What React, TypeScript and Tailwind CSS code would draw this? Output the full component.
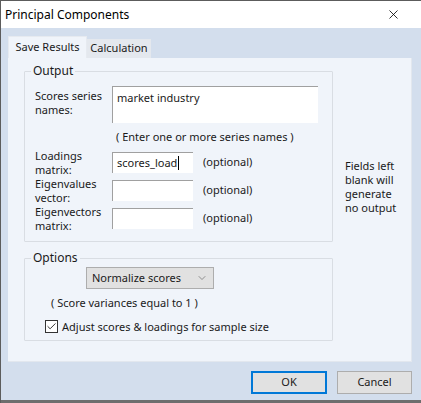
import { X, ChevronDown, Check } from "lucide-react";

const font = { fontFamily: '"Noto Sans", "Liberation Sans", sans-serif' };

// Label + single-line input + "(optional)" hint
const FieldRow = ({ label1, label2, value }: { label1: string; label2: string; value?: string }) => (
  <div className="flex items-center h-[28px]">
    <div className="w-[87px] pl-[10px] leading-[14px]">
      <div>{label1}</div>
      <div>{label2}</div>
    </div>
    <div className="w-[81px] h-[21px] bg-white border-t border-l border-[#a0a0a0] flex items-center pl-[4px]">
      {value && (
        <span className="flex items-center">
          {value}
          <span className="inline-block w-px h-[14px] bg-black ml-[1px]" />
        </span>
      )}
    </div>
    <span className="ml-[10px]">(optional)</span>
  </div>
);

export default function App() {
  return (
    <div
      className="w-[421px] h-[403px] flex flex-col bg-[#d3deed] border-l border-t border-[#5c5c5c] text-[11px] text-[#1a1a1a] overflow-hidden"
      style={font}
    >
      {/* title bar */}
      <div className="h-[27px] bg-white flex items-center justify-between pl-[4px] pr-[20px] shrink-0">
        <span className="text-[12px] text-black">Principal Components</span>
        <X size={15} strokeWidth={1.3} className="text-black" />
      </div>

      {/* tabs */}
      <div className="flex items-end pl-[7px] h-[30px] shrink-0">
        <div className="w-[79px] h-[22px] bg-[#f0f4fa] border-t border-l border-r border-[#e6eaf0] flex items-center justify-center">
          Save Results
        </div>
        <div className="w-[64px] h-[19px] bg-[#e4e8ee] flex items-center justify-center">Calculation</div>
      </div>

      {/* tab panel */}
      <div className="ml-[7px] w-[404px] h-[304px] bg-[#f0f4fa] border-r border-b border-[#e2e7ee] pl-[16px] pt-[4px] shrink-0">
        <div className="flex">
          <fieldset className="w-[309px] h-[180px] border border-[#d9dde3] rounded-[1px] px-0">
            <legend className="ml-[6px] px-[2px] text-[12px]">Output</legend>
            <div className="flex items-start mt-[6px]">
              <div className="w-[87px] pl-[10px] pt-[3px] leading-[14px]">
                <div>Scores series</div>
                <div>names:</div>
              </div>
              <div className="w-[206px] h-[37px] bg-white border-t border-l border-[#a0a0a0] pl-[4px] pt-[3px]">
                market industry
              </div>
            </div>
            <div className="pl-[91px] mt-[6px] mb-[3px]">( Enter one or more series names )</div>
            <FieldRow label1="Loadings" label2="matrix:" value="scores_load" />
            <FieldRow label1="Eigenvalues" label2="vector:" />
            <FieldRow label1="Eigenvectors" label2="matrix:" />
          </fieldset>
          <div className="ml-[12px] mt-[97px] leading-[14px]">
            Fields left
            <br />
            blank will
            <br />
            generate
            <br />
            no output
          </div>
        </div>

        <fieldset className="w-[309px] h-[92px] mt-[7px] border border-[#d9dde3] rounded-[1px] px-0">
          <legend className="ml-[6px] px-[2px] text-[12px]">Options</legend>
          <div className="pl-[61px]">
            <div className="w-[128px] h-[22px] bg-[#e1e1e1] border border-[#adadad] flex items-center justify-between pl-[5px] pr-[5px]">
              <span>Normalize scores</span>
              <ChevronDown size={12} strokeWidth={1.2} className="text-[#555]" />
            </div>
          </div>
          <div className="pl-[26px] mt-[6px]">( Score variances equal to 1 )</div>
          <div className="flex items-center pl-[20px] mt-[7px]">
            <div className="w-[13px] h-[13px] bg-white border border-[#333] flex items-center justify-center">
              <Check size={11} strokeWidth={2} className="text-[#222]" />
            </div>
            <span className="ml-[4px]">Adjust scores &amp; loadings for sample size</span>
          </div>
        </fieldset>
      </div>

      {/* buttons */}
      <div className="flex justify-end gap-[10px] pr-[9px] mt-[9px] shrink-0">
        <button className="w-[76px] h-[23px] bg-[#e1e1e1] border-2 border-[#0078d7] flex items-center justify-center">
          OK
        </button>
        <button className="w-[75px] h-[23px] bg-[#e1e1e1] border border-[#adadad] flex items-center justify-center">
          Cancel
        </button>
      </div>
      <div className="flex-1" />
      <div className="h-[3px] bg-[#6e6e6e] shrink-0" />
    </div>
  );
}
